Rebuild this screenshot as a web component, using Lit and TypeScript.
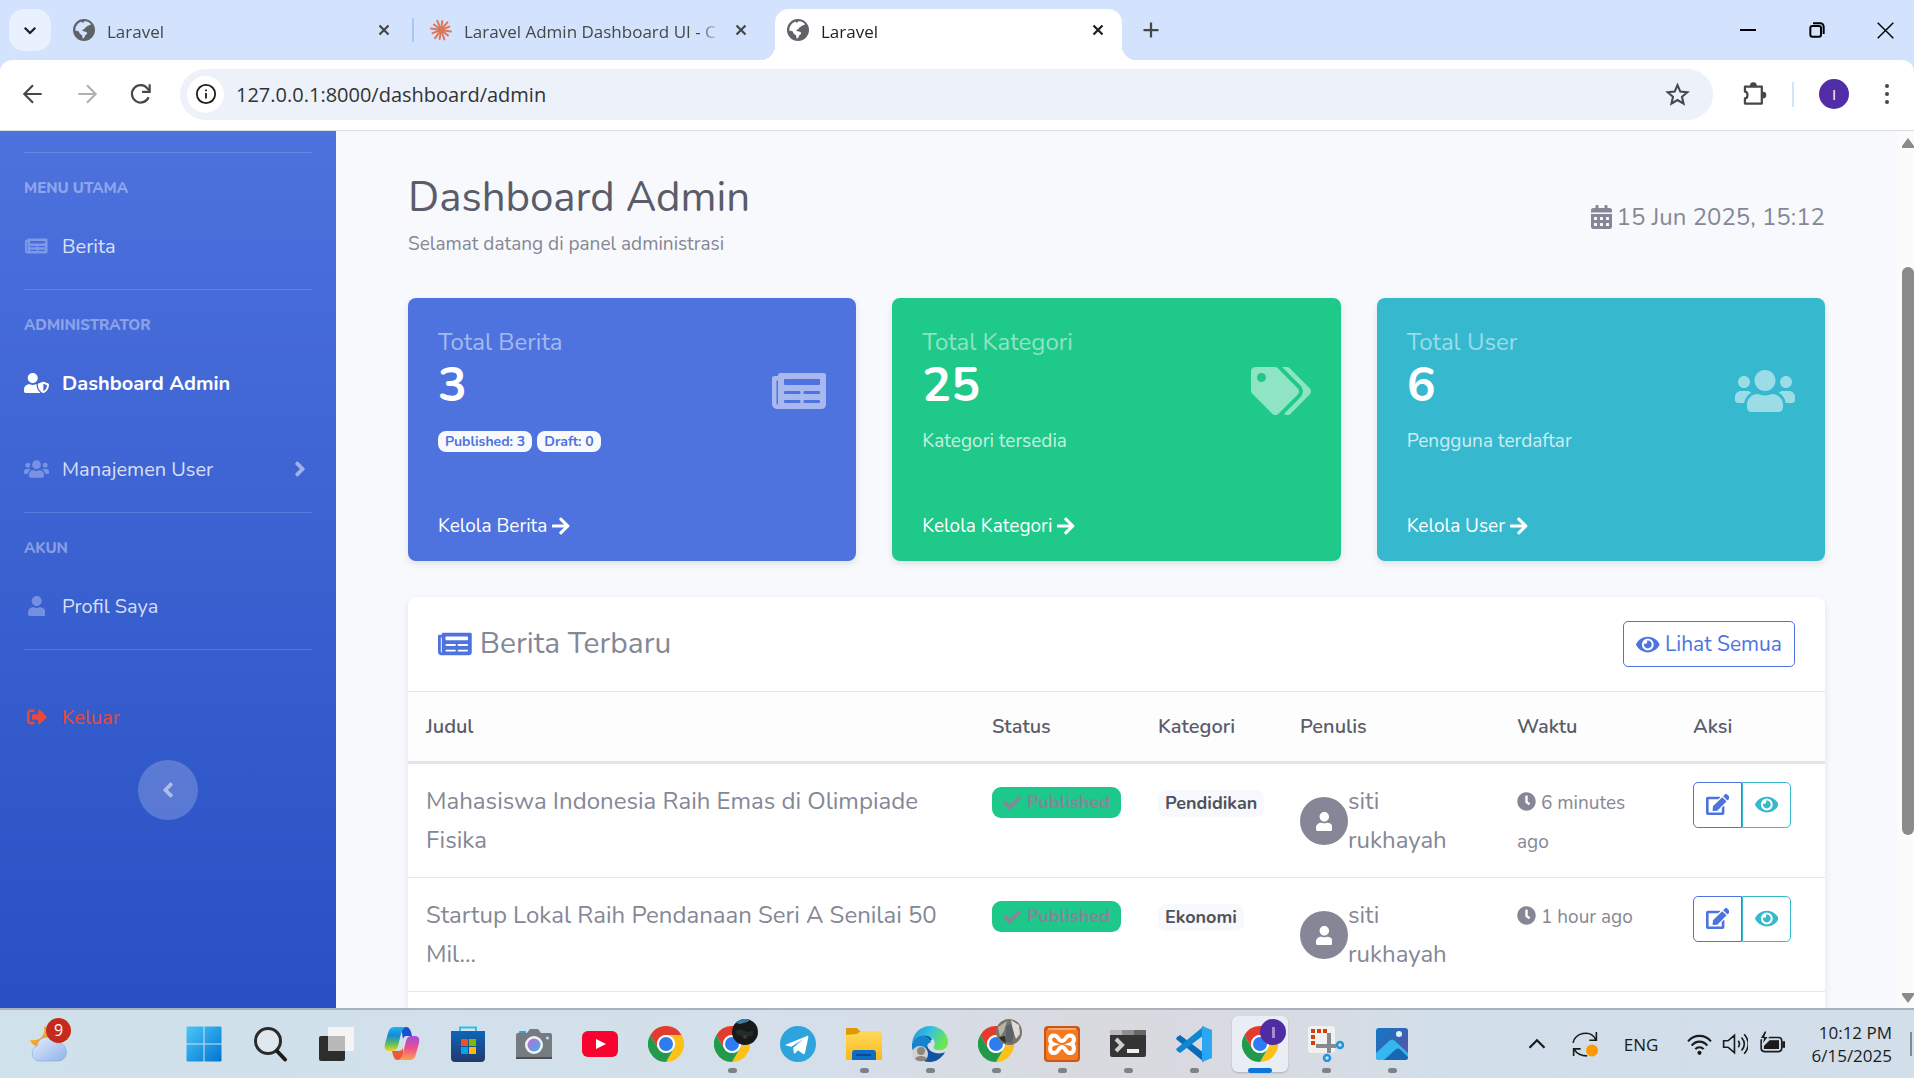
import { LitElement, html, svg, css, nothing, TemplateResult } from "lit";
import { customElement, state } from "lit/decorators.js";

/* ---------- solid icon set: [viewBox width, path] on a 512 unit grid ---------- */
const SOLID: Record<string, [number, string]> = {
  newspaper: [576, "M552 64H88c-13.255 0-24 10.745-24 24v8H24c-13.255 0-24 10.745-24 24v272c0 30.928 25.072 56 56 56h472c26.51 0 48-21.49 48-48V88c0-13.255-10.745-24-24-24zM56 400a8 8 0 0 1-8-8V144h16v248a8 8 0 0 1-8 8zm236-16H140c-6.627 0-12-5.373-12-12v-8c0-6.627 5.373-12 12-12h152c6.627 0 12 5.373 12 12v8c0 6.627-5.373 12-12 12zm208 0H348c-6.627 0-12-5.373-12-12v-8c0-6.627 5.373-12 12-12h152c6.627 0 12 5.373 12 12v8c0 6.627-5.373 12-12 12zm-208-96H140c-6.627 0-12-5.373-12-12v-8c0-6.627 5.373-12 12-12h152c6.627 0 12 5.373 12 12v8c0 6.627-5.373 12-12 12zm208 0H348c-6.627 0-12-5.373-12-12v-8c0-6.627 5.373-12 12-12h152c6.627 0 12 5.373 12 12v8c0 6.627-5.373 12-12 12zm0-96H140c-6.627 0-12-5.373-12-12v-40c0-6.627 5.373-12 12-12h360c6.627 0 12 5.373 12 12v40c0 6.627-5.373 12-12 12z"],
  userShield: [640, "M622.3 271.1l-115.2-45c-4.1-1.6-12.6-3.7-22.2 0l-115.2 45c-10.7 4.2-17.7 14-17.7 24.9 0 111.6 68.7 188.8 132.9 213.9 9.6 3.7 18 1.6 22.2 0C558.4 489.9 640 420.5 640 296c0-10.9-7-20.7-17.7-24.9zM496 462.4V273.3l95.5 37.3c-5.6 87.1-60.9 135.4-95.5 151.8zM224 256c70.7 0 128-57.3 128-128S294.7 0 224 0 96 57.3 96 128s57.3 128 128 128zm96 40c0-2.5.8-4.8 1.1-7.2-2.5-.1-4.9-.8-7.5-.8h-16.7c-22.2 10.2-46.9 16-72.9 16s-50.6-5.8-72.9-16h-16.7C60.2 288 0 348.2 0 422.4V464c0 26.5 21.5 48 48 48h352c6.8 0 13.3-1.5 19.2-4-54-42.9-99.2-116.7-99.2-212z"],
  users: [640, "M96 224c35.3 0 64-28.7 64-64s-28.7-64-64-64-64 28.7-64 64 28.7 64 64 64zm448 0c35.3 0 64-28.7 64-64s-28.7-64-64-64-64 28.7-64 64 28.7 64 64 64zm32 32h-64c-17.6 0-33.5 7.1-45.1 18.6 40.3 22.1 68.9 62 75.1 109.4h66c17.7 0 32-14.3 32-32v-32c0-35.3-28.7-64-64-64zm-256 0c61.9 0 112-50.1 112-112S381.9 32 320 32 208 82.1 208 144s50.1 112 112 112zm76.8 32h-8.3c-20.8 10-43.9 16-68.5 16s-47.6-6-68.5-16h-8.3C179.6 288 128 339.6 128 403.2V432c0 26.5 21.5 48 48 48h288c26.5 0 48-21.5 48-48v-28.8c0-63.6-51.6-115.2-115.2-115.2zm-223.7-13.4C161.5 263.1 145.6 256 128 256H64c-35.3 0-64 28.7-64 64v32c0 17.7 14.3 32 32 32h65.9c6.3-47.4 34.9-87.3 75.2-109.4z"],
  user: [448, "M224 256c70.7 0 128-57.3 128-128S294.7 0 224 0 96 57.3 96 128s57.3 128 128 128zm89.6 32h-16.7c-22.2 10.2-46.9 16-72.9 16s-50.6-5.8-72.9-16h-16.7C60.2 288 0 348.2 0 422.4V464c0 26.5 21.5 48 48 48h352c26.5 0 48-21.5 48-48v-41.6c0-74.2-60.2-134.4-134.4-134.4z"],
  signOut: [512, "M497 273L329 441c-15 15-41 4.5-41-17v-96H152c-13.3 0-24-10.7-24-24v-96c0-13.3 10.7-24 24-24h136V88c0-21.4 25.9-32 41-17l168 168c9.3 9.4 9.3 24.6 0 34zM192 436v-40c0-6.6-5.4-12-12-12H96c-17.7 0-32-14.3-32-32V160c0-17.7 14.3-32 32-32h84c6.6 0 12-5.4 12-12V76c0-6.6-5.4-12-12-12H96c-53 0-96 43-96 96v192c0 53 43 96 96 96h84c6.6 0 12-5.4 12-12z"],
  angleRight: [256, "M224.3 273l-136 136c-9.4 9.4-24.6 9.4-33.9 0l-22.6-22.6c-9.4-9.4-9.4-24.6 0-33.9l96.4-96.4-96.4-96.4c-9.4-9.4-9.4-24.6 0-33.9L54.3 103c9.4-9.4 24.6-9.4 33.9 0l136 136c9.5 9.4 9.5 24.6.1 34z"],
  angleLeft: [256, "M31.7 239l136-136c9.4-9.4 24.6-9.4 33.9 0l22.6 22.6c9.4 9.4 9.4 24.6 0 33.9L127.9 256l96.4 96.4c9.4 9.4 9.4 24.6 0 33.9L201.7 409c-9.4 9.4-24.6 9.4-33.9 0l-136-136c-9.5-9.4-9.5-24.6-.1-34z"],
  calendar: [448, "M0 464c0 26.5 21.5 48 48 48h352c26.5 0 48-21.5 48-48V192H0v272zm320-196c0-6.6 5.4-12 12-12h40c6.6 0 12 5.4 12 12v40c0 6.6-5.4 12-12 12h-40c-6.6 0-12-5.4-12-12v-40zm0 128c0-6.6 5.4-12 12-12h40c6.6 0 12 5.4 12 12v40c0 6.6-5.4 12-12 12h-40c-6.6 0-12-5.4-12-12v-40zM192 268c0-6.6 5.4-12 12-12h40c6.6 0 12 5.4 12 12v40c0 6.6-5.4 12-12 12h-40c-6.6 0-12-5.4-12-12v-40zm0 128c0-6.6 5.4-12 12-12h40c6.6 0 12 5.4 12 12v40c0 6.6-5.4 12-12 12h-40c-6.6 0-12-5.4-12-12v-40zM64 268c0-6.6 5.4-12 12-12h40c6.6 0 12 5.4 12 12v40c0 6.6-5.4 12-12 12H76c-6.6 0-12-5.4-12-12v-40zm0 128c0-6.6 5.4-12 12-12h40c6.6 0 12 5.4 12 12v40c0 6.6-5.4 12-12 12H76c-6.6 0-12-5.4-12-12v-40zM400 64h-48V16c0-8.8-7.2-16-16-16h-32c-8.8 0-16 7.2-16 16v48H160V16c0-8.8-7.2-16-16-16h-32c-8.8 0-16 7.2-16 16v48H48C21.5 64 0 85.5 0 112v48h448v-48c0-26.5-21.5-48-48-48z"],
  tags: [640, "M497.941 225.941L286.059 14.059A48 48 0 0 0 252.118 0H48C21.49 0 0 21.49 0 48v204.118a48 48 0 0 0 14.059 33.941l211.882 211.882c18.744 18.745 49.136 18.746 67.882 0l204.118-204.118c18.745-18.745 18.745-49.137 0-67.882zM112 160c-26.51 0-48-21.49-48-48s21.49-48 48-48 48 21.49 48 48-21.49 48-48 48zm513.941 133.823L421.823 497.941c-18.745 18.745-49.137 18.745-67.882 0l-.36-.36L527.64 323.522c16.999-16.999 26.36-39.6 26.36-63.64s-9.362-46.641-26.36-63.64L331.397 0h48.721a48 48 0 0 1 33.941 14.059l211.882 211.882c18.745 18.745 18.745 49.137 0 67.882z"],
  arrowRight: [448, "M190.5 66.9l22.2-22.2c9.4-9.4 24.6-9.4 33.9 0L441 239c9.4 9.4 9.4 24.6 0 33.9L246.6 467.3c-9.4 9.4-24.6 9.4-33.9 0l-22.2-22.2c-9.5-9.5-9.3-25 .4-34.3L311.4 296H24c-13.3 0-24-10.7-24-24v-32c0-13.3 10.7-24 24-24h287.4L190.9 101.2c-9.8-9.3-10-24.8-.4-34.3z"],
  eye: [576, "M572.52 241.4C518.29 135.59 410.93 64 288 64S57.68 135.64 3.48 241.41a32.35 32.35 0 0 0 0 29.19C57.71 376.41 165.07 448 288 448s230.32-71.64 284.52-177.41a32.35 32.35 0 0 0 0-29.19zM288 400a144 144 0 1 1 144-144 143.93 143.93 0 0 1-144 144zm0-240a95.31 95.31 0 0 0-25.31 3.79 47.85 47.85 0 0 1-66.9 66.9A95.78 95.78 0 1 0 288 160z"],
  edit: [576, "M402.6 83.2l90.2 90.2c3.8 3.8 3.8 10 0 13.8L274.4 405.6l-92.8 10.3c-12.4 1.4-22.9-9.1-21.5-21.5l10.3-92.8L388.8 83.2c3.8-3.8 10-3.8 13.8 0zm162-22.9l-48.8-48.8c-15.2-15.2-39.9-15.2-55.2 0l-35.4 35.4c-3.8 3.8-3.8 10 0 13.8l90.2 90.2c3.8 3.8 10 3.8 13.8 0l35.4-35.4c15.2-15.3 15.2-40 0-55.2zM384 346.2V448H64V128h229.8c3.2 0 6.2-1.3 8.5-3.5l40-40c7.6-7.6 2.2-20.5-8.5-20.5H48C21.5 64 0 85.5 0 112v352c0 26.5 21.5 48 48 48h352c26.5 0 48-21.5 48-48V306.2c0-10.7-12.9-16-20.5-8.5l-40 40c-2.2 2.3-3.5 5.3-3.5 8.5z"],
  check: [512, "M173.898 439.404l-166.4-166.4c-9.997-9.997-9.997-26.206 0-36.204l36.203-36.204c9.997-9.998 26.207-9.998 36.204 0L192 312.69 432.095 72.596c9.997-9.997 26.207-9.997 36.204 0l36.203 36.204c9.997 9.997 9.997 26.206 0 36.204l-294.4 294.401c-9.998 9.997-26.207 9.997-36.204-.001z"],
  clock: [512, "M256 8C119 8 8 119 8 256s111 248 248 248 248-111 248-248S393 8 256 8zm92.49 313l-20 25a16 16 0 0 1-22.49 2.5l-67-49.72a40 40 0 0 1-15-31.23V112a16 16 0 0 1 16-16h32a16 16 0 0 1 16 16v144l58 42.5a16 16 0 0 1 2.49 22.5z"],
};

const solid = (name: string, size: number) => {
  const [w, d] = SOLID[name];
  return html`<svg class="ico" aria-hidden="true" viewBox="0 0 ${w} 512" width=${(w / 512) * size} height=${size} fill="currentColor"><path d=${d}></path></svg>`;
};

const line = (size: number, body: TemplateResult | unknown, width = 2) =>
  html`<svg class="ico" aria-hidden="true" viewBox="0 0 24 24" width=${size} height=${size} fill="none" stroke="currentColor" stroke-width=${width}>${body}</svg>`;

const app36 = (body: unknown) => html`<svg class="ico" aria-hidden="true" viewBox="0 0 36 36" width="36" height="36">${body}</svg>`;

/* ---------- browser glyphs ---------- */
const globe = () => html`<svg class="ico" aria-hidden="true" viewBox="0 0 22 22" width="22" height="22">
  <circle cx="11" cy="11" r="11" fill="#5f6368"></circle>
  <path fill="#d3e3fd" class="land" d="M11.6 2.3c2.8-.3 5.300 1.100 6.600 3.200-1.700.2-2 1.300-3.300 1.300-1 0-1 1.200-2.100 1.500-1.200.4-.8 2-2.400 2.100-1.100.1-1.300.9-.5 1.600.9.700 2.700.1 3.800 1.300 1 1.100.3 2.100-.8 2.500-.9.4-1 1.400-1.300 2.300-.3.900-1 1.500-2 1.300-.3-1.300-.1-2.400-.900-3.300-.9-.9-2.500-1.300-2.500-2.900 0-1.500-2.300-1.400-3.900-1.500 0-4.700 2.700-8 6.700-9.100-.5 1.300.8 1.400 1.300.9.500-.4.700-.8 1.300-1.200z"></path></svg>`;
const closeX = () => line(18, svg`<path d="M6 6l12 12M18 6L6 18"></path>`, 3);
const burst = () => html`<svg class="ico" aria-hidden="true" viewBox="-11 -11 22 22" width="22" height="22" stroke="#d97757" stroke-width="2" stroke-linecap="round">
  ${[0, 30, 62, 90, 118, 152, 180, 210, 240, 270, 302, 330].map((a, i) => {
    const r = i % 2 ? 9 : 10;
    const t = ((a + 8) * Math.PI) / 180;
    return svg`<path d="M0 0L${(Math.cos(t) * r).toFixed(1)} ${(Math.sin(t) * r).toFixed(1)}"></path>`;
  })}</svg>`;

/* ---------- taskbar app icons ---------- */
const chromeShape = svg`
  <path fill="#e33b2e" d="M2.400 9A18 18 0 0 1 33.600 9L18 9A9 9 0 0 0 10.200 22.500Z"></path>
  <path fill="#fbc116" d="M33.600 9A18 18 0 0 1 18 36L25.800 22.500A9 9 0 0 0 18 9Z"></path>
  <path fill="#229a49" d="M18 36A18 18 0 0 1 2.400 9L10.200 22.500A9 9 0 0 0 25.800 22.500Z"></path>
  <circle cx="18" cy="18" r="9" fill="#fff"></circle><circle cx="18" cy="18" r="7" fill="#2f7cf0"></circle>`;

const APPS: { name: string; run?: boolean; active?: boolean; icon: () => unknown; badge?: () => unknown }[] = [
  { name: "Start", icon: () => app36(svg`
      <defs><linearGradient id="win" gradientUnits="userSpaceOnUse" x1="0" y1="0" x2="36" y2="36"><stop offset="0" stop-color="#4cc9fb"></stop><stop offset="1" stop-color="#0072cf"></stop></linearGradient></defs>
      <path fill="url(#win)" d="M1.500 .5h16v17h-17v-16a1 1 0 0 1 1-1zM18.500 .5h16a1 1 0 0 1 1 1v16h-17zM.5 18.500h17v17h-16a1 1 0 0 1-1-1zM18.500 18.500h17v16a1 1 0 0 1-1 1h-16z"></path>`) },
  { name: "Search", icon: () => app36(svg`<circle cx="16" cy="15" r="12.500" fill="#dfe8ee" stroke="#2b2b2b" stroke-width="3"></circle><path d="M25 25l8 8.500" stroke="#1c1c1c" stroke-width="4" stroke-linecap="round"></path>`) },
  { name: "Task view", icon: () => app36(svg`<rect x="1" y="10" width="26" height="25" rx="2" fill="#2d2d2d"></rect><rect x="10" y="1" width="26" height="24" rx="1" fill="#f4f4f4"></rect><path fill="#b9b9b9" d="M10 10h17v15H10z"></path>`) },
  { name: "Copilot", icon: () => app36(svg`
      <defs>
        <linearGradient id="cpa" x1="0" y1="0" x2="0" y2="1"><stop offset="0" stop-color="#18b8ea"></stop><stop offset=".35" stop-color="#1a86dd"></stop><stop offset=".7" stop-color="#5cbf5c"></stop><stop offset="1" stop-color="#f4d51c"></stop></linearGradient>
        <linearGradient id="cpb" x1="0" y1="0" x2="0" y2="1"><stop offset="0" stop-color="#a34ce0"></stop><stop offset=".5" stop-color="#ec4f8c"></stop><stop offset="1" stop-color="#fda24e"></stop></linearGradient>
      </defs>
      <path fill="#1b4fd0" d="M17 1h5c3 0 4 2 5 5l1 4h-5c-3 0-3 1-4 3z"></path>
      <path fill="#ec5a34" d="M19 34h-5c-3 0-4-2-5-5l-1-4h6c3 0 4-1 5-3z"></path>
      <path fill="url(#cpa)" d="M10 1h12c-3 1-4 4-5 7l-3 12c-1 4-3 5-6 5H5c-4 0-5-3-4-7L4 7c1-4 3-6 6-6z"></path>
      <path fill="url(#cpb)" d="M26 34H14c3-1 4-4 5-7l3-12c1-4 3-5 6-5h3c4 0 5 3 4 7l-3 11c-1 4-3 6-6 6z"></path>`) },
  { name: "Store", icon: () => app36(svg`
      <defs><linearGradient id="sto" x1="0" y1="0" x2="0" y2="1"><stop offset="0" stop-color="#0c66b6"></stop><stop offset="1" stop-color="#233a6c"></stop></linearGradient></defs>
      <path d="M10 7V1.500h16V7" fill="none" stroke="#2cc0f2" stroke-width="2"></path>
      <path fill="url(#sto)" d="M1 5h34v27a4 4 0 0 1-4 4H5a4 4 0 0 1-4-4z"></path>
      <path fill="#f25022" d="M11 13h7v7h-7z"></path><path fill="#7fba00" d="M19 13h7v7h-7z"></path><path fill="#00a4ef" d="M11 21h7v7h-7z"></path><path fill="#ffb900" d="M19 21h7v7h-7z"></path>`) },
  { name: "Camera", icon: () => app36(svg`
      <defs><linearGradient id="lens" x1="0" y1="0" x2="1" y2="1"><stop offset="0" stop-color="#c46ad8"></stop><stop offset="1" stop-color="#38b5e8"></stop></linearGradient></defs>
      <rect x="3" y="5" width="7" height="4" rx="1" fill="#2aa2dc"></rect>
      <path fill="#767b80" d="M2 7h9l3-4h8l3 4h9a2 2 0 0 1 2 2v24H0V9a2 2 0 0 1 2-2z"></path><path fill="#4c5054" d="M0 31h36v2H0z"></path>
      <circle cx="18" cy="19" r="9" fill="#f3f3f5"></circle><circle cx="18" cy="19" r="6.500" fill="url(#lens)"></circle><circle cx="31.500" cy="12" r="1.500" fill="#c7dcea"></circle>`) },
  { name: "YouTube", icon: () => app36(svg`<rect x="0" y="5" width="36" height="26" rx="6" fill="#f8032f"></rect><path fill="#fff" d="M14 13l10 5-10 5z"></path>`) },
  { name: "Chrome", icon: () => app36(chromeShape) },
  { name: "Chrome profile", run: true, icon: () => app36(chromeShape), badge: () => svg`<circle cx="13" cy="13" r="13" fill="#161a1c"></circle><path d="M4 4a13 13 0 0 1 14-3l-3 2-7 2z" fill="#3b7ea2"></path><path d="M3 12l6-2 6 3 7-1-2 5-8 1-6-2z" fill="#232d25"></path><circle cx="13" cy="18" r="2" fill="#4b3038"></circle>` },
  { name: "Telegram", icon: () => app36(svg`<circle cx="18" cy="18" r="18" fill="#2ea3dc"></circle><path fill="#fff" d="M6 18.500L27 10c1-.4 1.600.1 1.300 1.500L25 27c-.3 1.200-1 1.400-2 .9l-5-3.700-2.800 3c-.8.6-1.300.2-1.400-.5l-.6-4.900 10-8.600-12 7.500L6.200 19.500c-.8-.3-.8-.7-.2-1z"></path>`) },
  { name: "File Explorer", run: true, icon: () => app36(svg`
      <defs><linearGradient id="fol" x1="0" y1="0" x2="0" y2="1"><stop offset="0" stop-color="#ffd95c"></stop><stop offset="1" stop-color="#fbb918"></stop></linearGradient></defs>
      <path fill="#dd9a07" d="M0 3a1 1 0 0 1 1-1h10l4 4v5H0z"></path><path fill="url(#fol)" d="M0 9l11-1 4-3h20a1 1 0 0 1 1 1v28H0z"></path>
      <path fill="#0f6cc4" d="M6 34v-7a3 3 0 0 1 3-3h18a3 3 0 0 1 3 3v7z"></path><path fill="#0b4a93" d="M10 28h15v2H10z"></path>`) },
  { name: "Edge", run: true, icon: () => app36(svg`
      <defs><linearGradient id="edg" x1="0" y1="0" x2="1" y2=".4"><stop offset="0" stop-color="#1e90d8"></stop><stop offset=".5" stop-color="#34c1e0"></stop><stop offset="1" stop-color="#6ee650"></stop></linearGradient></defs>
      <path fill="#0f55a3" d="M5 12c6-6 14-3 15 2-4 0-6 4-4 8 3 5 11 7 17 4-3 6-9 10-15 10C8 36 1 28 0 20z"></path>
      <path fill="#1683d0" d="M0 18c2-8 10-11 15-7 2 1 4 3 4 5-5 2-7 8-3 14C6 33-1 26 0 18z"></path>
      <path fill="url(#edg)" d="M0 17C1 7 9 0 18 0c11 0 18 8 18 16 0 6-5 9-10 8-4 0-5-2-4-4 2-3 0-8-6-10C10 8 3 11 0 17z"></path>
      <circle cx="8" cy="28" r="8" fill="#d3d2cf"></circle><circle cx="9" cy="25" r="4" fill="#888783"></circle><path fill="#888783" d="M3 33c1-4 11-4 12 0-3 3-9 3-12 0z"></path>`) },
  { name: "Chrome profile", run: true, icon: () => app36(chromeShape), badge: () => svg`<circle cx="13" cy="13" r="13" fill="#77756b"></circle><path d="M2 8l9-6-3 10-4 6z" fill="#b9b5a5"></path><path d="M15 1l8 5 1 9-4 5-3-8z" fill="#dddcd8"></path><path d="M10 7l5-2 3 9-2 10-6-1z" fill="#5d6169"></path><path d="M3 18l6-1 1 7c-3-1-6-3-7-6z" fill="#2f3129"></path>` },
  { name: "XAMPP", run: true, icon: () => app36(svg`<rect width="36" height="36" rx="4" fill="#c9571a"></rect><rect x="2" y="3" width="32" height="31" rx="3" fill="#f47a22"></rect><path fill="#f9a86c" d="M4 2h28v2H4z"></path>
      <path d="M10 9.500c-5 0-5 7-1 8.500-4 1-4 9 1 9 5 0 4-6 8-6s3 6 8 6c5 0 5-8 1-9 4-1.500 4-8.500-1-8.500-5 0-4 5.500-8 5.500s-3-5.500-8-5.500z" fill="none" stroke="#fff" stroke-width="4"></path>`) },
  { name: "Terminal", run: true, icon: () => app36(svg`<rect y="4" width="36" height="27" rx="2" fill="#353535"></rect><path fill="#b8b8b8" d="M1 4h11v5H0V5a1 1 0 0 1 1-1z"></path><path fill="#8e8e8e" d="M12 4h12v5H12z"></path><path fill="#666" d="M24 4h11a1 1 0 0 1 1 1v4H24z"></path><path d="M6 13l6 6-6 6" fill="none" stroke="#cfcfcf" stroke-width="4"></path><path fill="#f0f0f0" d="M17 23h12v4H17z"></path>`) },
  { name: "VS Code", run: true, icon: () => app36(svg`<path fill="#0a6cb8" d="M1 11l3-2 24 18v9L0 13z"></path><path fill="#0f86d4" d="M1 25l3 2L28 9V0L0 23z"></path><path fill="#2aa7f0" d="M26 0l10 4v28l-10 4z"></path>`) },
  { name: "Chrome admin", run: true, active: true, icon: () => app36(chromeShape), badge: () => svg`<circle cx="13" cy="13" r="13" fill="#4f2ca3"></circle><path d="M12 8h3v11h-3z" fill="#a18fcb"></path>` },
  { name: "Snipping Tool", run: true, icon: () => app36(svg`<rect width="27" height="27" rx="3" fill="#f1f1f1"></rect><path d="M5 19V5h14" fill="none" stroke="#d4400d" stroke-width="4" stroke-dasharray="4 2"></path><path d="M21 7v20M8 20h20" stroke="#858a8f" stroke-width="4"></path><circle cx="19" cy="32" r="3" fill="none" stroke="#1e96dc" stroke-width="2.500"></circle><circle cx="32" cy="19" r="3" fill="none" stroke="#1e96dc" stroke-width="2.500"></circle>`) },
  { name: "Photos", run: true, icon: () => app36(svg`
      <defs><linearGradient id="pho" x1="0" y1="0" x2="1" y2="1"><stop offset="0" stop-color="#0e7ac8"></stop><stop offset=".6" stop-color="#3f5fb0"></stop><stop offset="1" stop-color="#7a49a8"></stop></linearGradient></defs>
      <rect x="2" y="2" width="32" height="32" rx="3" fill="url(#pho)"></rect><path fill="#35b6ef" d="M2 27l13-12c2-2 4-2 6 0l13 12v4a3 3 0 0 1-3 3H5a3 3 0 0 1-3-3z"></path><path fill="#1668b4" d="M10 34l11-10c2-2 4-2 6 0l7 7a3 3 0 0 1-3 3z"></path><circle cx="25" cy="8" r="3" fill="#e9f2fa"></circle>`) },
];

/* ---------- page data ---------- */
const CARDS = [
  { tone: "primary", label: "Total Berita", value: "3", icon: "newspaper", link: "Kelola Berita", badges: ["Published: 3", "Draft: 0"] },
  { tone: "success", label: "Total Kategori", value: "25", icon: "tags", link: "Kelola Kategori", note: "Kategori tersedia" },
  { tone: "info", label: "Total User", value: "6", icon: "users", link: "Kelola User", note: "Pengguna terdaftar" },
];

const NEWS = [
  { title: "Mahasiswa Indonesia Raih Emas di Olimpiade Fisika", category: "Pendidikan", author: "siti rukhayah", time: "6 minutes ago" },
  { title: "Startup Lokal Raih Pendanaan Seri A Senilai 50 Mil...", category: "Ekonomi", author: "siti rukhayah", time: "1 hour ago" },
];

@customElement("app-root")
export class AppRoot extends LitElement {
  @state() private url = "127.0.0.1:8000/dashboard/admin";

  static styles = css`
    :host {
      display: flex;
      flex-direction: column;
      height: 100vh;
      overflow: hidden;
      --ui: "Segoe UI", "Open Sans", "Noto Sans", sans-serif;
      --page: "Nunito", "Lato", "Open Sans", sans-serif;
      font-family: var(--page);
      background: #f8f9fc;
    }
    * { box-sizing: border-box; }
    button { border: 0; padding: 0; background: none; font: inherit; color: inherit; display: inline-flex; align-items: center; justify-content: center; }
    a { text-decoration: none; color: inherit; }
    .ico { display: block; flex: none; }

    /* tab strip */
    .strip { display: flex; flex: none; height: 60px; background: #d3e3fd; font-family: var(--ui); font-size: 17px; color: #474747; overflow: hidden; }
    .search { width: 42px; height: 42px; margin: 9px 10px 0 9px; border-radius: 15px; background: #e9f1fe; color: #1f1f1f; }
    .tab { position: relative; flex: 0 1 347px; min-width: 0; display: flex; align-items: center; gap: 12px; height: 51px; margin-top: 9px; padding: 0 15px 9px 12px; }
    .tab-title { flex: 1; min-width: 0; padding: 2px 0 0; overflow: hidden; white-space: nowrap; justify-content: flex-start; -webkit-mask-image: linear-gradient(90deg, #000 92%, transparent); mask-image: linear-gradient(90deg, #000 92%, transparent); }
    .tab-sep { width: 10px; height: 24px; margin-top: 18px; background: linear-gradient(#a8c7fa, #a8c7fa) 4px 0 / 2px 100% no-repeat; }
    .tab-sep.off { background: none; }
    .tab.active { background: #fff; border-radius: 14px 14px 0 0; color: #1f1f1f; }
    .tab.active::before, .tab.active::after { content: ""; position: absolute; bottom: 0; width: 14px; height: 14px; }
    .tab.active::before { right: 100%; background: radial-gradient(circle at 0 0, transparent 14px, #fff 14px); }
    .tab.active::after { left: 100%; background: radial-gradient(circle at 100% 0, transparent 14px, #fff 14px); }
    .tab.active .land { fill: #fff; }
    .new-tab { width: 42px; height: 42px; margin: 9px 0 0 8px; }
    .window { display: flex; margin: 0 -6px 0 auto; color: #000; }
    .window button { width: 69px; }

    /* toolbar */
    .toolbar-wrap { flex: none; background: #d3e3fd; }
    .toolbar { display: flex; align-items: center; height: 71px; padding: 0 9px 2px 6px; background: #fff; border-bottom: 1px solid #dcdde0; border-radius: 12px 12px 0 0; color: #474747; }
    .nav-btn { width: 54px; height: 42px; flex: none; }
    .nav-btn.dim { color: #b0b0b0; }
    .omnibox { flex: 1; min-width: 0; display: flex; align-items: center; height: 51px; margin-left: 12px; padding: 0 23px 0 7px; border-radius: 26px; background: #ecf1fa; }
    .site-info { width: 37px; height: 37px; border-radius: 50%; background: #fff; color: #1f1f1f; flex: none; }
    .url { flex: 1; min-width: 0; margin: 0 12px; padding: 0; border: 0; outline: 0; background: none; font-family: var(--ui); font-size: 20px; color: #333; }
    .ext { margin-left: 14px; }
    .bar-sep { width: 2px; height: 25px; margin: 0 25px 0 11px; background: #d3e3fd; }
    .me { width: 30px; height: 30px; border-radius: 50%; background: #512da8; color: #fff; font: 15px var(--ui); margin-right: 20px; }
    .more { width: 36px; height: 42px; }

    /* page */
    .page { flex: 1; min-height: 0; display: flex; overflow: hidden; }
    .sidebar { flex: none; width: 336px; padding: 21px 24px 0; background: linear-gradient(#4d72de, #2850c3); color: rgba(255, 255, 255, .8); font-size: 20px; }
    .group { border-top: 1px solid rgba(255, 255, 255, .15); }
    .group-head { margin: 0; padding: 23px 0 7px; font-size: 15px; line-height: 24px; font-weight: 800; color: rgba(255, 255, 255, .4); }
    .item { display: flex; align-items: center; gap: 13px; height: 78px; margin-bottom: 4px; }
    .item + .item { margin-top: 8px; }
    .item .glyph { width: 25px; display: flex; justify-content: center; color: rgba(255, 255, 255, .3); }
    .item.active { color: #fff; font-weight: 700; }
    .item.active .glyph { color: #fff; }
    .item .caret { margin: 0 6px 0 auto; color: rgba(255, 255, 255, .5); }
    .item.out, .item.out .glyph { color: #e74a3b; }
    .item.out { margin-top: 28px; }
    .toggle { display: flex; width: 60px; height: 60px; margin: 0 auto; border-radius: 50%; background: rgba(255, 255, 255, .2); color: rgba(255, 255, 255, .5); }

    .main { flex: 1; min-width: 0; display: flex; flex-direction: column; padding: 41px 72px 0; color: #858796; font-size: 24px; line-height: 36px; overflow: hidden; }
    .heading { display: flex; justify-content: space-between; align-items: center; margin-bottom: 36px; }
    h1 { margin: 0; font-size: 42px; line-height: 52px; font-weight: 400; color: #5a5c69; }
    .sub { margin: 5px 0 3px; font-size: 19px; line-height: 30px; }
    .date { display: flex; align-items: center; gap: 5px; }
    .cards { display: grid; grid-template-columns: repeat(3, 1fr); gap: 36px; margin-bottom: 36px; }
    .card { display: flex; flex-direction: column; height: 263px; padding: 27px 30px 20px; border-radius: 8px; color: #fff; box-shadow: 0 3px 6px rgba(58, 59, 69, .12); }
    .primary { background: #4e73df; } .success { background: #1ec98a; } .info { background: #36b9cf; }
    .card-top { display: flex; justify-content: space-between; align-items: center; flex: none; }
    .card-label { margin: 0; line-height: 34px; color: rgba(255, 255, 255, .5); }
    .value { font-size: 48px; line-height: 52px; font-weight: 700; }
    .note { margin-top: 15px; height: 30px; font-size: 19px; line-height: 30px; color: rgba(255, 255, 255, .75); display: flex; align-items: center; gap: 5px; }
    .pill { padding: 0 7px; border-radius: 8px; background: #f8f9fc; color: #4e73df; font-size: 14px; line-height: 21px; font-weight: 700; }
    .card-icon { opacity: .5; }
    .card-link { display: inline-flex; align-items: center; align-self: flex-start; gap: 5px; margin-top: auto; font-size: 19px; line-height: 30px; }

    .panel { flex: 1 0 auto; background: #fff; border-radius: 8px 8px 0 0; box-shadow: 0 3px 6px rgba(58, 59, 69, .12); }
    .panel-head { display: flex; align-items: center; justify-content: space-between; height: 94px; padding: 0 30px; }
    h2 { display: flex; align-items: center; gap: 8px; margin: 0; font-size: 30px; line-height: 36px; font-weight: 400; }
    h2 .ico { color: #4e73df; }
    .outline { display: inline-flex; align-items: center; gap: 5px; height: 46px; padding: 0 12px; border: 1px solid #4e73df; border-radius: 5px; color: #4e73df; font-size: 21px; }
    table { width: 100%; table-layout: fixed; border-collapse: separate; border-spacing: 0; }
    th { height: 73px; padding: 0 18px; text-align: left; font-size: 20px; font-weight: 600; color: #5a5c69; background: #fdfdfe; border-top: 1px solid #e3e6f0; border-bottom: 3px solid #e3e4ee; }
    td { padding: 18px 18px 17px; vertical-align: top; line-height: 39px; border-bottom: 1px solid #e3e6f0; }
    .c-status { width: 166px; } .c-cat { width: 142px; } .c-author { width: 217px; } .c-time { width: 176px; } .c-act { width: 150px; }
    .status { display: inline-flex; align-items: center; gap: 6px; height: 31px; padding: 0 11px; margin-top: 5px; vertical-align: top; border-radius: 9px; background: #1cc88a; font-size: 18px; font-weight: 700; }
    .cat { display: inline-block; height: 27px; margin-top: 8px; padding: 0 7px; vertical-align: top; border-radius: 8px; background: #f8f9fc; color: #4f515d; font-size: 18px; line-height: 27px; font-weight: 700; }
    .author { display: flex; align-items: center; }
    .author-name { max-width: 110px; }
    .avatar { flex: none; display: flex; align-items: center; justify-content: center; width: 48px; height: 48px; border-radius: 50%; background: #858796; color: #fff; }
    .time { padding-top: 20px; padding-bottom: 15px; font-size: 19px; }
    .time .ico { display: inline-block; vertical-align: -2px; margin-right: 5px; }
    .actions { display: flex; width: 98px; }
    .act { flex: 1; display: flex; align-items: center; justify-content: center; height: 46px; padding-bottom: 2px; border: 1px solid #4e73df; border-radius: 5px 0 0 5px; color: #4e73df; }
    .act.view { border-color: #36b9cc; color: #36b9cc; border-radius: 0 5px 5px 0; }

    .scroll { flex: none; display: flex; flex-direction: column; align-items: flex-end; width: 17px; padding: 7px 0 5px 5px; background: #fbfbfc; color: #8b8b8b; }
    .thumb { width: 12px; flex: 566 0 0; margin: 119px 0 158px; border-radius: 6px; background: #8b8b8b; }

    /* taskbar */
    .taskbar { flex: none; display: flex; align-items: stretch; height: 70px; border-top: 2px solid #a9b2bc; background: linear-gradient(90deg, #cfe1ea 0%, #d2e0ea 30%, #d5dfe9 44%, #d9dae0 56%, #d9dae2 66%, #d1dfe9 76%, #d2deea 100%); font-family: var(--ui); font-size: 17px; color: #1b1b1b; }
    .weather { position: relative; width: 96px; margin-right: 75px; }
    .count { position: absolute; left: 46px; top: 8px; width: 25px; height: 25px; border-radius: 50%; background: #c42b1c; color: #fff; font-size: 16px; line-height: 25px; text-align: center; }
    .apps { display: flex; flex: none; }
    .app { position: relative; width: 66px; }
    .app::after { content: ""; position: absolute; bottom: 5px; width: 9px; height: 5px; border-radius: 3px; background: #7d8287; display: none; }
    .app.run::after { display: block; }
    .app.active::after { width: 24px; background: #0b78d8; }
    .tile { display: flex; align-items: center; justify-content: center; width: 56px; height: 56px; border-radius: 6px; }
    .active .tile { background: #e9eef4; box-shadow: 0 1px 2px rgba(0, 0, 0, .2); }
    .badge { position: absolute; left: 33px; top: 9px; }
    .tray { display: flex; align-items: center; margin-left: auto; }
    .tray button { height: 56px; }
    .t-up { width: 48px; } .t-sync { width: 48px; } .t-lang { width: 64px; } .t-net { width: 36px; margin-left: 8px; } .t-vol { width: 36px; } .t-bat { width: 37px; }
    .tray .clock { display: block; width: 102px; height: auto; text-align: right; line-height: 23px; }
    .edge-line { width: 2px; height: 24px; margin: 0 2px 0 18px; background: #7f8b97; }
  `;

  private renderTab(title: string, icon: unknown, active = false) {
    return html`<div class="tab ${active ? "active" : ""}">
      ${icon}<button class="tab-title" role="tab" aria-selected=${active ? "true" : "false"}>${title}</button>
      <button aria-label="Close tab">${closeX()}</button>
    </div>`;
  }

  private renderBrowser() {
    return html`
      <div class="strip" role="tablist">
        <button class="search" aria-label="Search tabs">${line(18, svg`<path d="M5 9l7 7 7-7"></path>`, 3)}</button>
        ${this.renderTab("Laravel", globe())}<span class="tab-sep"></span>
        ${this.renderTab("Laravel Admin Dashboard UI - C", burst())}<span class="tab-sep off"></span>
        ${this.renderTab("Laravel", globe(), true)}
        <button class="new-tab" aria-label="New tab">${line(18, svg`<path d="M12 2v20M2 12h20"></path>`, 3)}</button>
        <div class="window">
          <button aria-label="Minimize">${line(16, svg`<path d="M0 12h24"></path>`, 3)}</button>
          <button aria-label="Restore">${line(16, svg`<rect x="2" y="6" width="16" height="16" rx="3"></rect><path d="M6 2h11a5 5 0 0 1 5 5v11"></path>`, 3)}</button>
          <button aria-label="Close window">${line(17, svg`<path d="M1 1l22 22M23 1L1 23"></path>`, 2)}</button>
        </div>
      </div>
      <div class="toolbar-wrap"><div class="toolbar">
        <button class="nav-btn" aria-label="Back">${line(26, svg`<path d="M20 12H5M12 4l-8 8 8 8"></path>`)}</button>
        <button class="nav-btn dim" aria-label="Forward">${line(26, svg`<path d="M4 12h15M12 4l8 8-8 8"></path>`)}</button>
        <button class="nav-btn" aria-label="Reload">${line(26, svg`<path d="M19 15a8 8 0 1 1-1-8l2 2"></path><path d="M20 3v7h-7"></path>`)}</button>
        <div class="omnibox">
          <button class="site-info" aria-label="Site information">${line(22, svg`<circle cx="12" cy="12" r="10"></circle><path d="M12 11v6M12 7v2"></path>`)}</button>
          <input class="url" aria-label="Address" .value=${this.url} @input=${(e: Event) => (this.url = (e.target as HTMLInputElement).value)} />
          <button aria-label="Bookmark">${line(25, svg`<path d="M12 3l2.700 6.200 6.700.6-5.100 4.400 1.500 6.600L12 17.300l-5.800 3.500 1.500-6.600-5.100-4.400 6.700-.6z"></path>`)}</button>
        </div>
        <button class="nav-btn ext" aria-label="Extensions">${line(27, svg`<path d="M3.500 5h15v15h-15v-4.500c3 0 3-6 0-6z" stroke-linejoin="round"></path><path d="M8.500 4a2.500 2.500 0 0 1 5 0zM19.500 10a2.500 2.500 0 0 1 0 5z" fill="currentColor" stroke-width="1"></path>`)}</button>
        <span class="bar-sep"></span>
        <button class="me" aria-label="Profile">I</button>
        <button class="more" aria-label="Menu">${line(24, svg`<g fill="currentColor" stroke="none"><circle cx="12" cy="4" r="2"></circle><circle cx="12" cy="12" r="2"></circle><circle cx="12" cy="20" r="2"></circle></g>`)}</button>
      </div></div>`;
  }

  private renderItem(label: string, icon: string, cls = "", caret = false) {
    return html`<a class="item ${cls}" href="#"><span class="glyph">${solid(icon, 20)}</span>${label}${caret ? html`<span class="caret">${solid("angleRight", 24)}</span>` : nothing}</a>`;
  }

  private renderSidebar() {
    return html`<nav class="sidebar">
      <div class="group"><p class="group-head">MENU UTAMA</p>${this.renderItem("Berita", "newspaper")}</div>
      <div class="group"><p class="group-head">ADMINISTRATOR</p>
        ${this.renderItem("Dashboard Admin", "userShield", "active")}${this.renderItem("Manajemen User", "users", "", true)}
      </div>
      <div class="group"><p class="group-head">AKUN</p>${this.renderItem("Profil Saya", "user")}</div>
      <div class="group">${this.renderItem("Keluar", "signOut", "out")}</div>
      <button class="toggle" aria-label="Toggle sidebar">${solid("angleLeft", 24)}</button>
    </nav>`;
  }

  private renderMain() {
    return html`<main class="main">
      <header class="heading">
        <div><h1>Dashboard Admin</h1><p class="sub">Selamat datang di panel administrasi</p></div>
        <div class="date">${solid("calendar", 24)}<span>15 Jun 2025, 15:12</span></div>
      </header>
      <section class="cards">
        ${CARDS.map((c) => html`<article class="card ${c.tone}">
          <div class="card-top">
            <div>
              <p class="card-label">${c.label}</p>
              <div class="value">${c.value}</div>
              <div class="note">${c.badges ? c.badges.map((b) => html`<span class="pill">${b}</span>`) : c.note}</div>
            </div>
            <span class="card-icon">${solid(c.icon, 48)}</span>
          </div>
          <a class="card-link" href="#">${c.link} ${solid("arrowRight", 20)}</a>
        </article>`)}
      </section>
      <section class="panel">
        <div class="panel-head">
          <h2>${solid("newspaper", 30)}Berita Terbaru</h2>
          <a class="outline" href="#">${solid("eye", 21)}Lihat Semua</a>
        </div>
        <table>
          <thead><tr><th>Judul</th><th class="c-status">Status</th><th class="c-cat">Kategori</th><th class="c-author">Penulis</th><th class="c-time">Waktu</th><th class="c-act">Aksi</th></tr></thead>
          <tbody>
            ${NEWS.map((n) => html`<tr>
              <td>${n.title}</td>
              <td><span class="status">${solid("check", 18)}Published</span></td>
              <td><span class="cat">${n.category}</span></td>
              <td><div class="author"><span class="avatar">${solid("user", 19)}</span><span class="author-name">${n.author}</span></div></td>
              <td class="time">${solid("clock", 19)}${n.time}</td>
              <td><div class="actions"><a class="act" href="#" aria-label="Edit">${solid("edit", 21)}</a><a class="act view" href="#" aria-label="Lihat">${solid("eye", 21)}</a></div></td>
            </tr>`)}
          </tbody>
        </table>
      </section>
    </main>`;
  }

  private renderTaskbar() {
    return html`<footer class="taskbar">
      <button class="weather" aria-label="Weather">
        <svg class="ico" aria-hidden="true" viewBox="0 0 38 40" width="38" height="40">
          <defs><linearGradient id="cloud" x1="0" y1="0" x2="1" y2="1"><stop offset="0" stop-color="#e4edfc"></stop><stop offset="1" stop-color="#8fb2ea"></stop></linearGradient></defs>
          <path fill="#f3a526" d="M15 2c2 8-3 16-14 14 4 9 14 8 19 2 4-6 1-13-5-16z"></path>
          <path fill="url(#cloud)" stroke="#7f9fdc" stroke-width=".5" d="M9 37a8 8 0 0 1-1-15c1-10 15-12 19-3 13-2 14 18 2 18z"></path>
        </svg>
        <span class="count">9</span>
      </button>
      <div class="apps">
        ${APPS.map((a) => html`<button class="app ${a.run ? "run" : ""} ${a.active ? "active" : ""}" aria-label=${a.name}>
          <span class="tile">${a.icon()}</span>
          ${a.badge ? html`<svg class="badge" aria-hidden="true" viewBox="0 0 26 26" width="26" height="26">${a.badge()}</svg>` : nothing}
        </button>`)}
      </div>
      <div class="tray">
        <button class="t-up" aria-label="Show hidden icons">${line(18, svg`<path d="M2 17l10-10 10 10"></path>`, 3)}</button>
        <button class="t-sync" aria-label="Update">${line(26, svg`<path d="M1 11C2 2 17-2 22 8M22.500 1v7.500H16M1.500 23v-6.500H8M2 17c3 5 7 6 12 6" stroke-width="1.500"></path><circle cx="18.500" cy="18" r="5.500" fill="#ff9800" stroke="none"></circle>`)}</button>
        <button class="t-lang">ENG</button>
        <button class="t-net" aria-label="Network">${line(25, svg`<path d="M1 9c6-7 16-7 22 0M4.500 13c4-5 11-5 15 0M8 16.500c2-2.500 6-2.500 8 0"></path><circle cx="12" cy="20" r="2" fill="currentColor" stroke="none"></circle>`)}</button>
        <button class="t-vol" aria-label="Volume">${line(26, svg`<path d="M1.500 9v6h4l6 5V4l-6 5zM15 9c1.500 2 1.500 4 0 6M18 6c3.500 4 3.500 8 0 12M20.500 3c5 6 5 12 0 18" stroke-width="1.500"></path>`)}</button>
        <button class="t-bat" aria-label="Battery">${line(26, svg`<rect x="2" y="6" width="19" height="13" rx="3" stroke-width="1.500"></rect><path d="M5 16v-2l5-5h8v7z" fill="currentColor" stroke-width="1"></path><path d="M22 10h2v5h-2z" fill="currentColor" stroke-width="1"></path><path d="M5 0L1 7h3l-1 6 6-8H5.500l2-5z" fill="currentColor" stroke="#d2deea" stroke-width="1"></path>`)}</button>
        <button class="clock">10:12 PM<br />6/15/2025</button>
        <span class="edge-line"></span>
      </div>
    </footer>`;
  }

  render() {
    return html`
      ${this.renderBrowser()}
      <div class="page">
        ${this.renderSidebar()}
        ${this.renderMain()}
        <div class="scroll" aria-hidden="true">
          <svg class="ico" viewBox="0 0 12 10" width="12" height="10" fill="currentColor"><path d="M6 0l6 8a1 1 0 0 1-1 2H1a1 1 0 0 1-1-2z"></path></svg>
          <span class="thumb"></span>
          <svg class="ico" viewBox="0 0 12 10" width="12" height="10" fill="currentColor"><path d="M6 10l6-8a1 1 0 0 0-1-2H1a1 1 0 0 0-1 2z"></path></svg>
        </div>
      </div>
      ${this.renderTaskbar()}`;
  }
}
